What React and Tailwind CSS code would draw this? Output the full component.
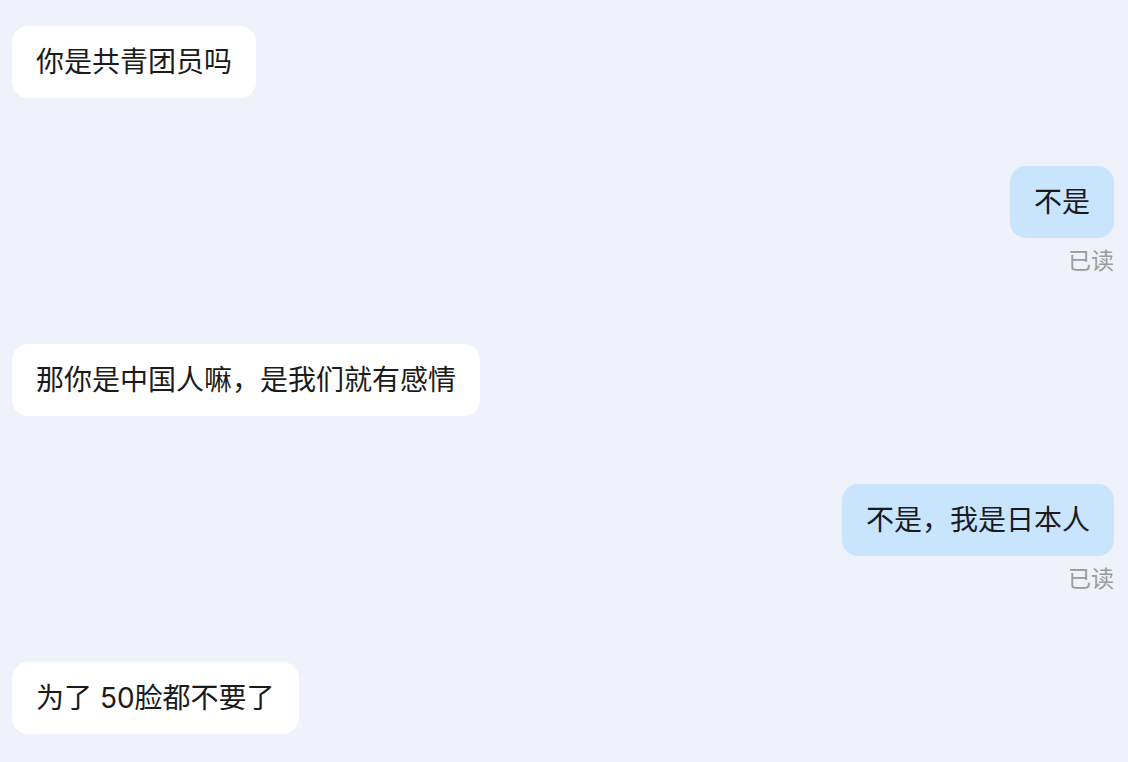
import React from "react";

const messages = [
    { id: 1, mine: false, text: "你是共青团员吗" },
    { id: 2, mine: true, text: "不是", read: true },
    { id: 3, mine: false, text: "那你是中国人嘛，是我们就有感情" },
    { id: 4, mine: true, text: "不是，我是日本人", read: true },
    { id: 5, mine: false, text: "为了 50脸都不要了" },
];

const Bubble = function ({ msg }) {
    return (
        <div className={msg.mine ? "flex flex-col items-end" : "flex flex-col items-start"}>
            <div
                className={
                    (msg.mine ? "bg-[#c8e5fd]" : "bg-white") +
                    " rounded-[16px] px-[24px] py-[16px] text-[28px] leading-[40px] text-[#1b1b1b]"
                }>
                {msg.text}
            </div>
            {msg.read && (
                <div className="mt-[8px] text-[23px] leading-[30px] text-[#9b9b9b]">已读</div>
            )}
        </div>
    );
};

export default function App() {
    return (
        <div
            className="min-h-screen w-full bg-[#eff2fa] pl-[12px] pr-[14px] pt-[26px] pb-[20px]"
            style={{ fontFamily: 'Inter, "Noto Sans CJK SC", sans-serif' }}>
            <div className="flex flex-col gap-[68px]">
                {messages.map((m) => (
                    <Bubble key={m.id} msg={m} />
                ))}
            </div>
        </div>
    );
}
